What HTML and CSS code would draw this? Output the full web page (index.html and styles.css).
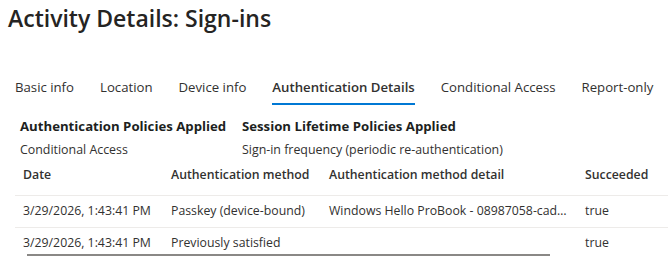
FILE: index.html
```html
<!DOCTYPE html>
<html lang="en">
<head>
  <meta charset="UTF-8" />
  <title>Activity Details: Sign-ins</title>
  <link rel="stylesheet" href="styles.css">
</head>
<body>
  <h1 class="title">Activity Details: Sign-ins</h1>

  <nav class="tabs">
    <span class="tab">Basic info</span>
    <span class="tab">Location</span>
    <span class="tab">Device info</span>
    <span class="tab active">Authentication Details</span>
    <span class="tab">Conditional Access</span>
    <span class="tab">Report-only</span>
  </nav>

  <div class="policies">
    <div class="policy policy-auth">
      <div class="policy-head">Authentication Policies Applied</div>
      <div class="policy-value">Conditional Access</div>
    </div>
    <div class="policy">
      <div class="policy-head">Session Lifetime Policies Applied</div>
      <div class="policy-value">Sign-in frequency (periodic re-authentication)</div>
    </div>
  </div>

  <div class="grid-wrap">
    <table class="grid">
      <colgroup>
        <col class="c-date"><col class="c-method"><col class="c-detail"><col class="c-ok">
      </colgroup>
      <thead>
        <tr><th>Date</th><th>Authentication method</th><th>Authentication method detail</th><th>Succeeded</th></tr>
      </thead>
      <tbody>
        <tr><td>3/29/2026, 1:43:41 PM</td><td>Passkey (device-bound)</td><td class="trunc">Windows Hello ProBook - 08987058-cad…</td><td>true</td></tr>
        <tr><td>3/29/2026, 1:43:41 PM</td><td>Previously satisfied</td><td></td><td>true</td></tr>
      </tbody>
    </table>
    <div class="hscroll"></div>
  </div>
</body>
</html>
```

FILE: styles.css
```css
/* base */
*, *::before, *::after { box-sizing: border-box; margin: 0; padding: 0; }
body { font-family: 'Segoe UI', 'Open Sans', sans-serif; font-size: 14px; color: #323130; background: #fff; width: 668px; height: 257px; overflow: hidden; }

.title { font-size: 23px; font-weight: 600; line-height: 32px; padding: 2px 0 0 8px; color: #252423; }

/* tabs */
.tabs { display: flex; gap: 26px; padding: 43px 0 0 15px; }
.tab { font-size: 13.2px; line-height: 20px; padding-bottom: 6px; border-bottom: 2px solid transparent; white-space: nowrap; }
.tab.active { font-weight: 600; border-bottom-color: #0078d4; }

/* policies */
.policies { display: flex; padding: 11px 0 0 20px; }
.policy { display: flex; flex-direction: column; }
.policy-auth { width: 222px; }
.policy-head { font-weight: 700; font-size: 13.2px; line-height: 20px; color: #201f1e; }
.policy-value { font-size: 12.4px; line-height: 20px; padding-top: 4px; }

/* table */
.grid-wrap { position: relative; margin-left: 15px; }
.grid { border-collapse: collapse; table-layout: fixed; width: 680px; }
.c-date { width: 148px; }
.c-method { width: 158px; }
.c-detail { width: 256px; }
.grid th { font-weight: 600; text-align: left; font-size: 12.3px; padding: 2px 8px 8px; height: 35px; border-bottom: 1px solid #edebe9; }
.grid td { font-size: 12.3px; padding: 0 8px 2px; height: 32px; border-bottom: 1px solid #edebe9; white-space: nowrap; overflow: hidden; }
.trunc { text-overflow: ellipsis; }
.hscroll { position: absolute; left: 12px; bottom: 4px; width: 523px; height: 2px; background: #8a8886; }
```
